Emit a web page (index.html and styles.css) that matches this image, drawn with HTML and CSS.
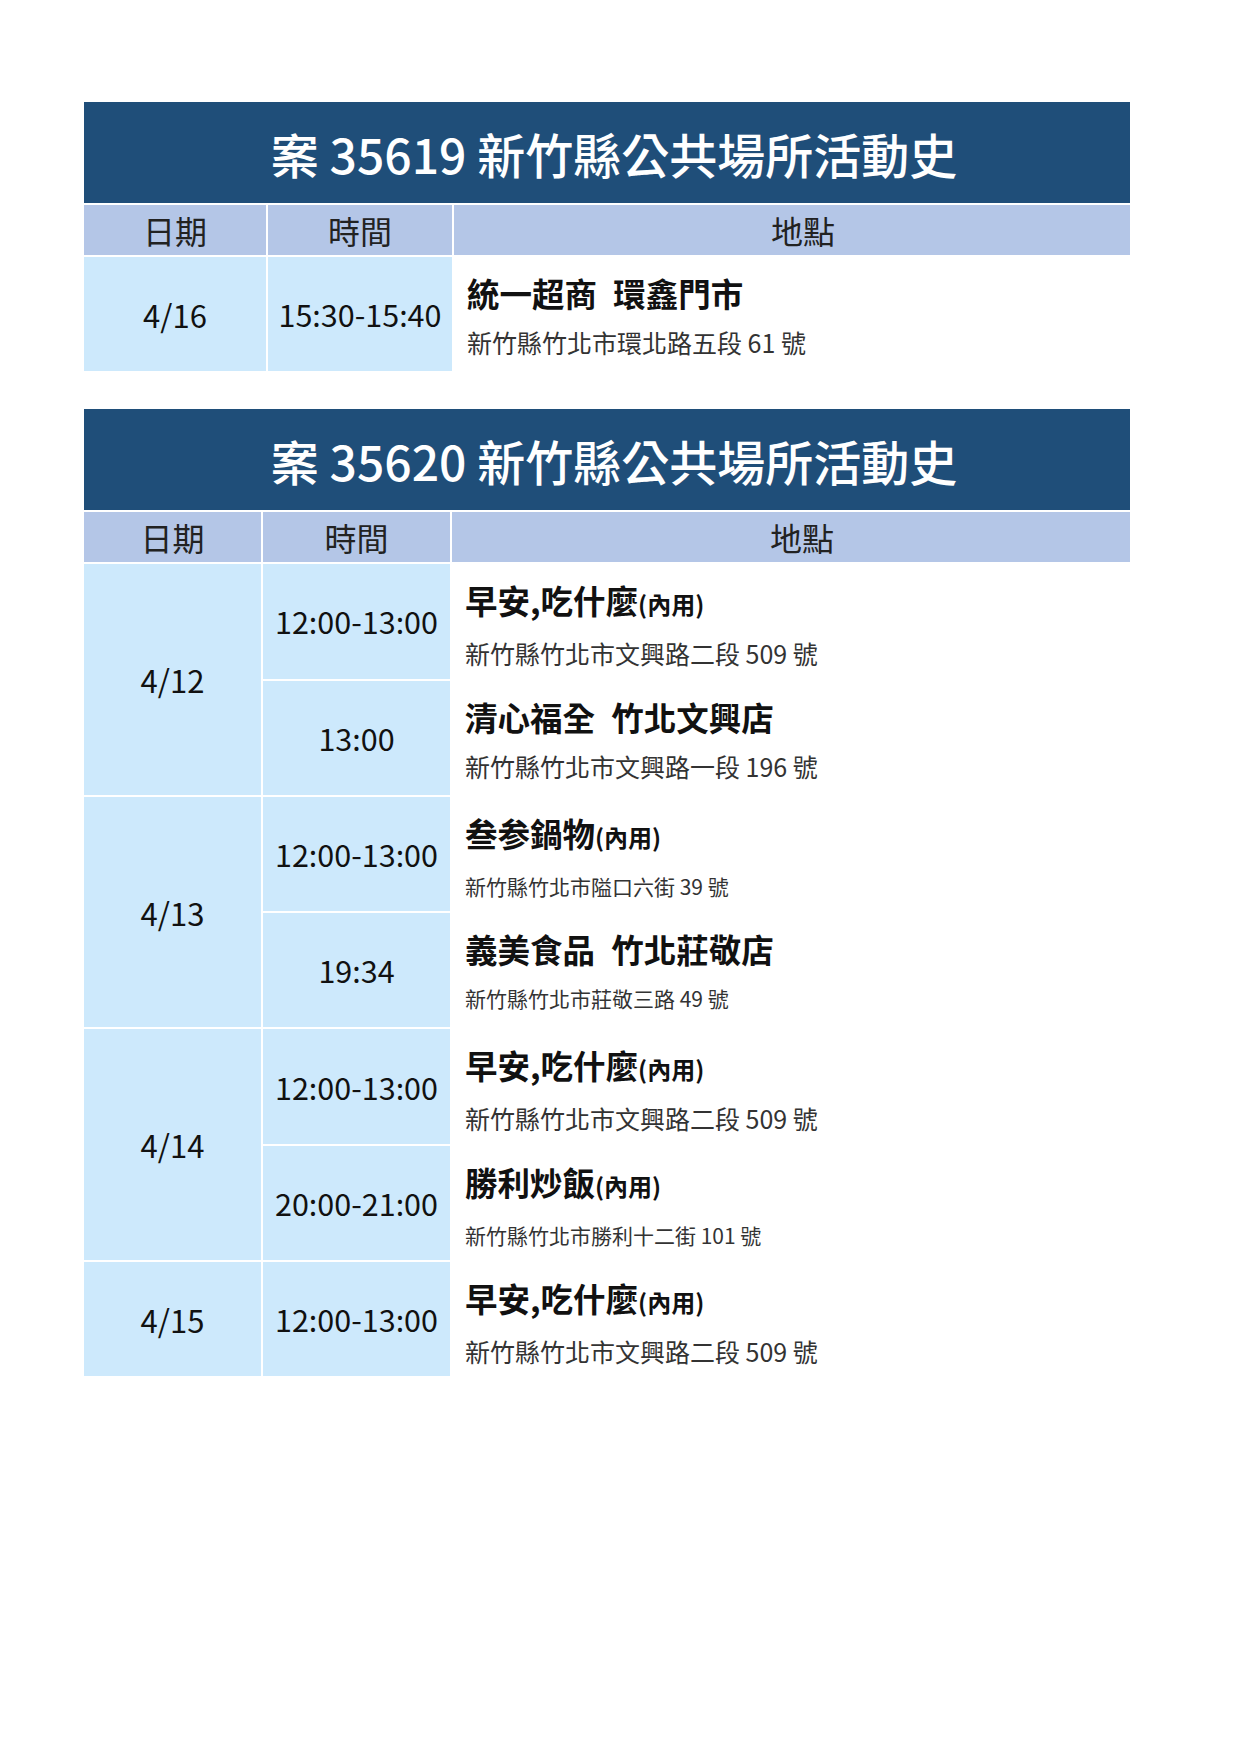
FILE: index.html
```html
<!DOCTYPE html>
<html lang="zh-Hant">
<head>
<meta charset="utf-8">
<title>新竹縣公共場所活動史</title>
<link rel="stylesheet" href="styles.css">
</head>
<body>
<main class="page">
  <section class="case case-a">
    <div class="case-title">案 35619 新竹縣公共場所活動史</div>
    <div class="grid">
      <div class="hd">日期</div>
      <div class="hd">時間</div>
      <div class="hd hd-place">地點</div>

      <div class="cell date">4/16</div>
      <div class="cell time">15:30-15:40</div>
      <div class="place">
        <div class="name">統一超商&ensp;環鑫門市</div>
        <div class="addr">新竹縣竹北市環北路五段 61 號</div>
      </div>
    </div>
  </section>

  <section class="case case-b">
    <div class="case-title">案 35620 新竹縣公共場所活動史</div>
    <div class="grid">
      <div class="hd">日期</div>
      <div class="hd">時間</div>
      <div class="hd hd-place">地點</div>

      <div class="cell date span2">4/12</div>
      <div class="cell time">12:00-13:00</div>
      <div class="place">
        <div class="name">早安,吃什麼<span class="note">(內用)</span></div>
        <div class="addr">新竹縣竹北市文興路二段 509 號</div>
      </div>
      <div class="cell time">13:00</div>
      <div class="place">
        <div class="name">清心福全&ensp;竹北文興店</div>
        <div class="addr">新竹縣竹北市文興路一段 196 號</div>
      </div>

      <div class="cell date span2">4/13</div>
      <div class="cell time">12:00-13:00</div>
      <div class="place">
        <div class="name">叁参鍋物<span class="note">(內用)</span></div>
        <div class="addr small">新竹縣竹北市隘口六街 39 號</div>
      </div>
      <div class="cell time">19:34</div>
      <div class="place">
        <div class="name">義美食品&ensp;竹北莊敬店</div>
        <div class="addr small">新竹縣竹北市莊敬三路 49 號</div>
      </div>

      <div class="cell date span2">4/14</div>
      <div class="cell time">12:00-13:00</div>
      <div class="place">
        <div class="name">早安,吃什麼<span class="note">(內用)</span></div>
        <div class="addr">新竹縣竹北市文興路二段 509 號</div>
      </div>
      <div class="cell time">20:00-21:00</div>
      <div class="place">
        <div class="name">勝利炒飯<span class="note">(內用)</span></div>
        <div class="addr small">新竹縣竹北市勝利十二街 101 號</div>
      </div>

      <div class="cell date">4/15</div>
      <div class="cell time">12:00-13:00</div>
      <div class="place">
        <div class="name">早安,吃什麼<span class="note">(內用)</span></div>
        <div class="addr">新竹縣竹北市文興路二段 509 號</div>
      </div>
    </div>
  </section>
</main>
</body>
</html>
```

FILE: styles.css
```css
html, body {
  margin: 0;
  padding: 0;
  background: #ffffff;
}

body {
  font-family: "Noto Sans CJK TC", "Noto Sans CJK JP", "Noto Sans", sans-serif;
  color: #111111;
}

.page {
  width: 1046px;
  padding: 102px 0 0 84px;
  display: flex;
  flex-direction: column;
  gap: 38px;
}

.case {
  display: flex;
  flex-direction: column;
  gap: 2px;
  background: #ffffff;
}

.case-title {
  height: 101px;
  background: #1f4e79;
  color: #ffffff;
  font-size: 48px;
  font-weight: 500;
  display: flex;
  align-items: center;
  justify-content: center;
  padding-left: 14px;
  white-space: nowrap;
}

.grid {
  display: grid;
  gap: 2px;
  grid-auto-rows: 114.3px;
  grid-template-rows: 50px;
}

.case-a .grid {
  grid-template-columns: 182px 184px 1fr;
}

.case-b .grid {
  grid-template-columns: 177px 187px 1fr;
}

.hd {
  background: #b4c6e7;
  color: #222222;
  font-size: 32px;
  font-weight: 400;
  display: flex;
  align-items: center;
  justify-content: center;
}

.hd-place {
  padding-left: 22px;
}

.cell {
  background: #cde9fc;
  display: flex;
  align-items: center;
  justify-content: center;
  font-size: 30.5px;
  font-weight: 400;
  color: #111111;
  white-space: nowrap;
}

.date {
  font-size: 31px;
}

.span2 {
  grid-row: span 2;
}

.place {
  padding: 16px 12px 0 13px;
  background: #ffffff;
}

.name {
  font-size: 32.5px;
  font-weight: 700;
  line-height: 40px;
  color: #111111;
  white-space: nowrap;
}

.note {
  font-size: 24px;
}

.addr {
  margin-top: 12px;
  font-size: 25px;
  line-height: 34px;
  color: #333333;
  white-space: nowrap;
}

.addr.small {
  font-size: 21px;
}
```
